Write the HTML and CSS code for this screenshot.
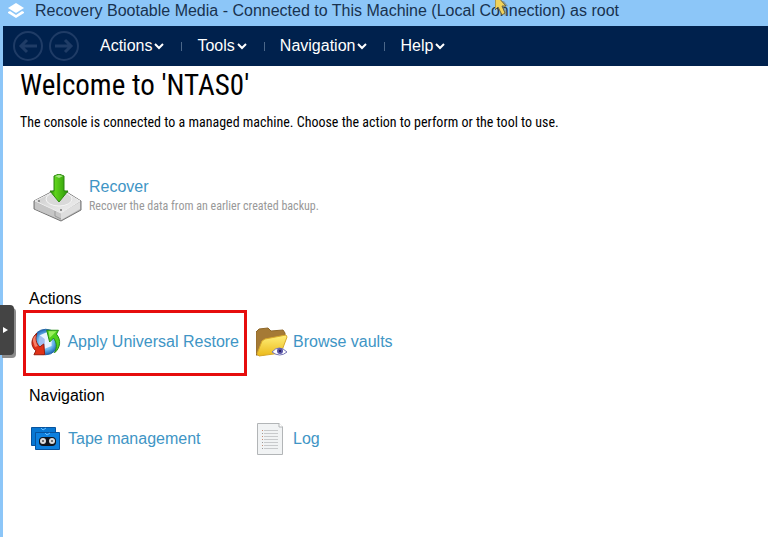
FILE: index.html
```
<!DOCTYPE html>
<html lang="en">
	<head>
		<meta charset="utf-8">
		<title>Recovery Bootable Media</title>
		<link rel="stylesheet" href="styles.css">
	</head>
	<body>
		<div class="window">
			<header class="titleBar">
				<svg class="logo" width="18" height="16" viewBox="0 0 18 16">
					<path d="M9 0L17 5L9 10L1 5Z" fill="#fff"/>
					<path d="M1 9L3 8L9 12L15 8L17 9V10L9 15L1 10Z" fill="#fff"/>
				</svg>
				<span>Recovery Bootable Media - Connected to This Machine (Local Connection) as root</span>
			</header>
			<nav class="toolBar">
				<button class="historyButton" aria-label="Back">
					<svg width="30" height="30" viewBox="0 0 30 30" fill="none" stroke="#1f3c66">
						<circle cx="15" cy="15" r="14" stroke-width="2"/>
						<path d="M24 15H9M14 9L8 15L14 21" stroke-width="3"/>
					</svg>
				</button>
				<button class="historyButton" aria-label="Forward">
					<svg width="30" height="30" viewBox="0 0 30 30" fill="none" stroke="#1f3c66">
						<circle cx="15" cy="15" r="14" stroke-width="2"/>
						<path d="M6 15H21M16 9L22 15L16 21" stroke-width="3"/>
					</svg>
				</button>
				<div class="menu">
					<button>Actions<svg width="10" height="8" viewBox="0 0 10 8"><path d="M1 2L5 6L9 2"/></svg></button>
					<button>Tools<svg width="10" height="8" viewBox="0 0 10 8"><path d="M1 2L5 6L9 2"/></svg></button>
					<button>Navigation<svg width="10" height="8" viewBox="0 0 10 8"><path d="M1 2L5 6L9 2"/></svg></button>
					<button>Help<svg width="10" height="8" viewBox="0 0 10 8"><path d="M1 2L5 6L9 2"/></svg></button>
				</div>
			</nav>
			<main class="content">
				<h1>Welcome to 'NTAS0'</h1>
				<p class="intro">The console is connected to a managed machine. Choose the action to perform or the tool to use.</p>

				<div class="recover">
					<svg width="50" height="48" viewBox="0 0 50 48">
						<defs>
							<linearGradient id="diskTop" x1="0" y1="0" x2="1" y2="1">
								<stop offset="0" stop-color="#c8c8c8"/>
								<stop offset="1" stop-color="#f4f4f4"/>
							</linearGradient>
							<linearGradient id="arrowGreen">
								<stop offset="0" stop-color="#278a05"/>
								<stop offset="0.3" stop-color="#5fd31c"/>
								<stop offset="1" stop-color="#2a9607"/>
							</linearGradient>
						</defs>
						<path d="M1 27L20 17H32L48 27V36L28 47L1 35Z" fill="#b5b5b5" stroke="#777"/>
						<path d="M2 28L28 39V46L2 35Z" fill="#c6c6c6"/>
						<path d="M28 39L47 28V35L28 46Z" fill="#dedede"/>
						<path d="M2 27L20 18H32L47 27L28 39Z" fill="url(#diskTop)" stroke="#eee"/>
						<ellipse cx="26" cy="25" rx="13" ry="7" fill="#d9d9d9" stroke="#f5f5f5"/>
						<path d="M22 37V42L28 45" fill="none" stroke="#999"/>
						<circle cx="6" cy="27" r="1" fill="#777"/>
						<circle cx="28" cy="36" r="1" fill="#777"/>
						<path d="M21 2L26 0L31 2V17H35L26 28L17 17H21Z" fill="url(#arrowGreen)" stroke="#2d8510"/>
						<path d="M22 2L26 1L30 2L26 4Z" fill="#a8e886"/>
					</svg>
					<div>
						<a href="#recover">Recover</a>
						<p>Recover the data from an earlier created backup.</p>
					</div>
				</div>

				<section class="group">
					<h2>Actions</h2>
					<div class="tiles">
						<a class="tile highlighted" href="#restore">
							<svg width="32" height="32" viewBox="0 0 32 32">
								<defs>
									<radialGradient id="globe">
										<stop offset="0" stop-color="#d8f2ff"/>
										<stop offset="0.6" stop-color="#6db9ee"/>
										<stop offset="1" stop-color="#1c63b4"/>
									</radialGradient>
								</defs>
								<circle cx="15" cy="16" r="13" fill="url(#globe)" stroke="#2666a8"/>
								<path d="M9 9L16 6L21 10V20L14 23L9 19Z" fill="#e9f3ff"/>
								<path d="M9 9L14 13V23L9 19Z" fill="#a3bff0"/>
								<path d="M16 4H28L26 8C31 14 30 22 24 27C27 21 26 16 23 12L19 16Z" fill="#4fd01d" stroke="#248d10"/>
								<path d="M18 5H26L19 12Z" fill="#9bf05c"/>
								<path d="M14 29H3L5 25C-1 20 0 12 6 7C4 13 5 17 9 21L13 18Z" fill="#df3218" stroke="#971c0b"/>
								<path d="M2 15C2 12 3 10 5 9C4 13 5 17 7 20L4 21Z" fill="#f58069"/>
							</svg>
							<span>Apply Universal Restore</span>
						</a>
						<a class="tile" href="#vaults">
							<svg width="32" height="32" viewBox="0 0 32 32">
								<defs>
									<linearGradient id="folderFront" x1="0" y1="0" x2="0" y2="1">
										<stop offset="0" stop-color="#fff07a"/>
										<stop offset="1" stop-color="#ebb91b"/>
									</linearGradient>
								</defs>
								<path d="M0 29V6L3 3L12 2L15 5L27 4L29 7V12L8 29Z" fill="#a57a35" stroke="#8f682a"/>
								<path d="M1 28L6 15L9 13L30 9L31 11L25 27L3 30Z" fill="url(#folderFront)" stroke="#d8a92a"/>
								<path d="M16 26Q23 18 31 26Q24 32 16 26Z" fill="#fff" stroke="#7676b6"/>
								<circle cx="24" cy="25" r="3" fill="#5a55a8"/>
								<circle cx="24" cy="25" r="1" fill="#17134e"/>
							</svg>
							<span>Browse vaults</span>
						</a>
					</div>
				</section>

				<section class="group">
					<h2>Navigation</h2>
					<div class="tiles">
						<a class="tile" href="#tapes">
							<svg width="32" height="32" viewBox="0 0 32 32">
								<path d="M0.500 4.500H24.500V22.500H0.500Z" fill="#0877d2" stroke="#07539e"/>
								<path d="M10 5L12 7L15 5" fill="none" stroke="#67bcff"/>
								<path d="M4.500 9.500H28.500V26.500H4.500Z" fill="#0c80df" stroke="#07539e"/>
								<path d="M14 10L16 12L19 10" fill="none" stroke="#67bcff"/>
								<rect x="8" y="14" width="17" height="9" rx="4" fill="#10151d"/>
								<circle cx="12" cy="18" r="3" fill="#ddd"/>
								<circle cx="21" cy="18" r="3" fill="#ddd"/>
								<circle cx="12" cy="18" r="1" fill="#555"/>
								<circle cx="21" cy="18" r="1" fill="#555"/>
							</svg>
							<span>Tape management</span>
						</a>
						<a class="tile" href="#log">
							<svg width="32" height="32" viewBox="0 0 32 32">
								<path d="M1.500 0.500H23L26.500 4V31.500H1.500Z" fill="#f1f3f4" stroke="#b2b5b7"/>
								<path d="M23 0V4H27" fill="#fff" stroke="#b2b5b7"/>
								<path d="M8 7.500H22M8 10.500H22M8 13.500H22M8 16.500H22M8 19.500H22M8 22.500H22M8 25.500H22" stroke="#c8cacc"/>
								<path d="M6 7.500H7M6 13.500H7M6 16.500H7M6 22.500H7" stroke="#c98d72"/>
								<path d="M6 10.500H7M6 19.500H7M6 25.500H7" stroke="#999"/>
							</svg>
							<span>Log</span>
						</a>
					</div>
				</section>
			</main>
		</div>
		<button class="drawerHandle" aria-label="Open side panel">
			<svg width="5" height="8" viewBox="0 0 5 8"><path d="M0 1L5 4L0 7Z" fill="#fff"/></svg>
		</button>
		<svg class="cursor" width="18" height="18" viewBox="0 0 18 18">
			<path d="M1 0V9L4 7L8 15L11 13L7 6L11 5L7 0Z" fill="#776b40" opacity="0.4" transform="translate(2 1)"/>
			<path d="M0 -3V10L3 7L7 15L10 13L7 6L11 6L3 -3Z" fill="#f0d25c" stroke="#6c6440"/>
		</svg>
	</body>
</html>
```

FILE: styles.css
```
body {
	margin: 0;
	background: #ffffff;
	color: #000000;
	font: 16px/20px "Liberation Sans", Arial, sans-serif;
}

.window {
	box-sizing: border-box;
	min-height: 100vh;
	border-left: 3px solid #8cc6f8;
}

.titleBar {
	display: flex;
	align-items: center;
	gap: 10px;
	box-sizing: border-box;
	height: 26px;
	padding: 0 4px 4px;
	background: #8cc6f8;
	color: #18324f;
	white-space: nowrap;
}

.toolBar {
	display: flex;
	align-items: center;
	gap: 6px;
	height: 40px;
	padding-left: 10px;
	background: #00214d;
}

.toolBar button {
	display: flex;
	align-items: center;
	padding: 0;
	border: 0;
	background: none;
	color: #ffffff;
	font: inherit;
}

.menu {
	display: flex;
	align-items: center;
	margin-left: 15px;
}

.menu button {
	gap: 2px;
}

.menu button + button::before {
	content: "";
	width: 1px;
	height: 9px;
	margin: 0 13px 0 17px;
	background: #4b6789;
}

.menu path {
	fill: none;
	stroke: #ffffff;
	stroke-width: 2;
}

.content {
	padding: 0 20px 20px 17px;
}

h1,
.intro,
.recover p {
	font-family: "Roboto Condensed", "Arial Narrow", "Liberation Sans", sans-serif;
}

h1 {
	margin: 0;
	font-size: 29px;
	font-weight: normal;
	line-height: 38px;
}

.intro {
	margin: 8px 0 0;
	font-size: 14px;
}

.recover {
	display: flex;
	align-items: center;
	gap: 6px;
	margin: 42px 0 66px 13px;
}

.recover div {
	padding-bottom: 4px;
}

.recover p {
	margin: 0;
	color: #999999;
	font-size: 12px;
	line-height: 18px;
}

a {
	color: #4095c5;
	text-decoration: none;
}

.group {
	margin: 0 0 9px 3px;
}

h2 {
	margin: 0 0 0 6px;
	font-size: 16px;
	font-weight: normal;
	line-height: 22px;
}

.tiles {
	display: grid;
	grid-template-columns: 224px 1fr;
	gap: 1px;
}

.tile {
	display: flex;
	align-items: center;
	gap: 5px;
	box-sizing: border-box;
	height: 66px;
	padding: 0 5px 2px;
	border: 3px solid transparent;
	white-space: nowrap;
}

.highlighted {
	border-color: #e60d0d;
}

/* sits over the left window border */
.drawerHandle {
	position: absolute;
	top: 305px;
	left: 0;
	display: flex;
	align-items: center;
	width: 14px;
	height: 50px;
	padding: 0 0 0 3px;
	border: 0;
	border-radius: 0 4px 4px 0;
	background: #444444;
	box-shadow: 2px 3px 0 #8c8c8c;
}

.cursor {
	position: absolute;
	top: 0;
	left: 495px;
}
```
